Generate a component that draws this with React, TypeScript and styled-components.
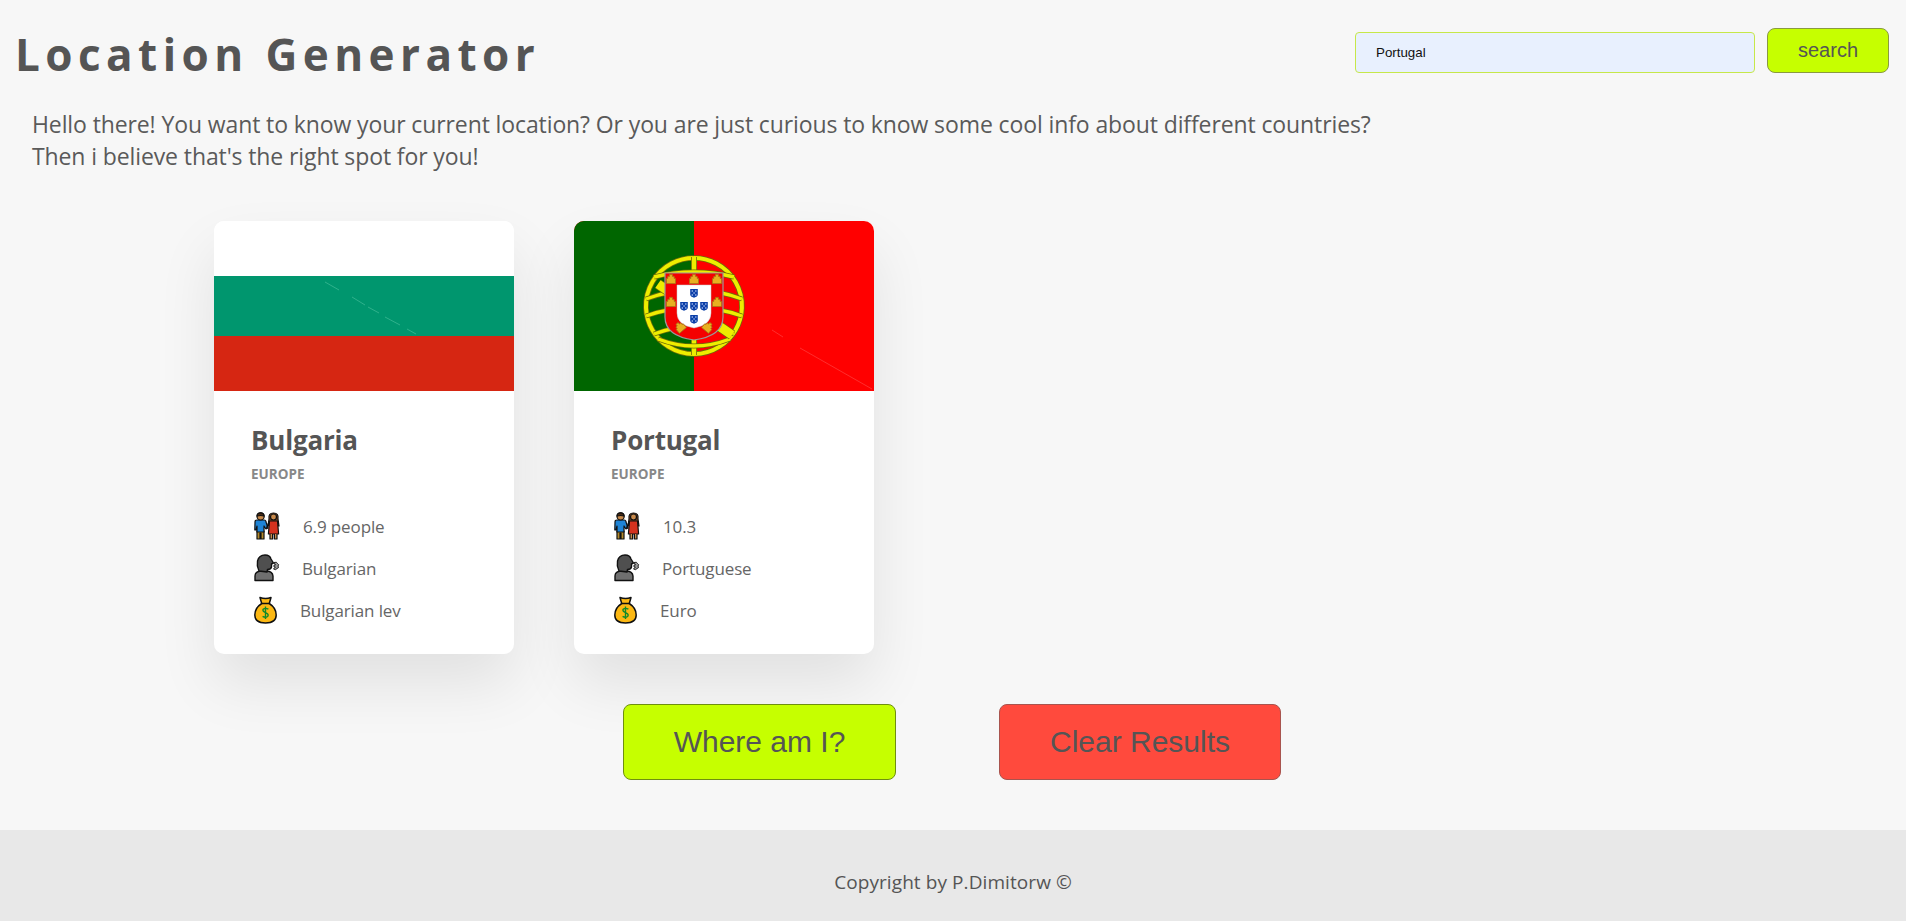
import * as React from "react";
import styled, { createGlobalStyle } from "styled-components";

const GlobalStyle = createGlobalStyle`
  html, body {
    margin: 0;
    padding: 0;
    background: #f7f7f7;
    color: #555;
    font-family: "Open Sans", "Noto Sans", sans-serif;
  }
  * {
    box-sizing: border-box;
  }
`;

const Page = styled.div`
  display: flex;
  flex-direction: column;
  width: 100%;
  height: 921px;
  overflow: hidden;
`;

const Header = styled.header`
  display: flex;
  justify-content: space-between;
  align-items: flex-start;
  padding: 26px 17px 0 15px;
  height: 108px;
`;

const Title = styled.h1`
  margin: 0;
  font-size: 44px;
  line-height: 56px;
  font-weight: 700;
  letter-spacing: 5.45px;
  color: #555;
`;

const SearchForm = styled.form`
  display: flex;
  align-items: flex-end;
  gap: 12px;
  margin-top: 2px;
`;

const SearchInput = styled.input`
  width: 400px;
  height: 41px;
  padding: 0 20px;
  background: #e8f0fe;
  border: 1px solid #c6e84a;
  border-radius: 4px;
  font-family: "Liberation Sans", Arial, sans-serif;
  font-size: 13.33px;
  color: #111;
  outline: none;
`;

const SearchButton = styled.button`
  width: 122px;
  height: 45px;
  padding: 0 0 1px;
  background: #c6ff00;
  border: 1px solid #8a9a40;
  border-radius: 8px;
  font-family: "Liberation Sans", Arial, sans-serif;
  font-size: 20px;
  color: #555;
`;

const Intro = styled.p`
  margin: 0;
  padding-left: 32px;
  font-size: 23px;
  line-height: 32px;
  letter-spacing: -0.11px;
  color: #5a5a5a;
`;

const Cards = styled.section`
  display: flex;
  gap: 60px;
  padding: 49px 0 0 214px;
`;

const Card = styled.article`
  width: 300px;
  height: 433px;
  background: #fff;
  border-radius: 10px;
  overflow: hidden;
  box-shadow: 0 30px 60px rgba(0, 0, 0, 0.09);
`;

const Flag = styled.svg`
  display: block;
  width: 300px;
  height: 170px;
`;

const CardBody = styled.div`
  padding: 31px 38px 0 37px;
`;

const CountryName = styled.h2`
  margin: 0;
  font-size: 26px;
  line-height: 36px;
  font-weight: 700;
  letter-spacing: -0.2px;
  color: #555;
`;

const Region = styled.h3`
  margin: 7px 0 0;
  font-size: 13.5px;
  line-height: 18px;
  font-weight: 700;
  color: #888;
`;

const Facts = styled.ul`
  display: flex;
  flex-direction: column;
  gap: 14px;
  margin: 29px 0 0;
  padding: 0 0 0 3px;
  list-style: none;
`;

const Fact = styled.li`
  display: flex;
  align-items: center;
  gap: 23px;
  height: 28px;
  font-size: 17px;
  letter-spacing: -0.12px;
  color: #666;
`;

const Actions = styled.div`
  display: flex;
  justify-content: center;
  gap: 103px;
  margin-top: 50px;
  padding-right: 2px;
`;

const ActionButton = styled.button<{ $tone: "go" | "clear" }>`
  width: ${(p) => (p.$tone === "go" ? 273 : 282)}px;
  height: 76px;
  background: ${(p) => (p.$tone === "go" ? "#c6ff00" : "#ff4a3d")};
  border: 1px solid ${(p) => (p.$tone === "go" ? "#6f8f10" : "#a8544e")};
  border-radius: 8px;
  font-family: "Liberation Sans", Arial, sans-serif;
  font-size: 30px;
  color: #555;
`;

const Footer = styled.footer`
  display: flex;
  justify-content: center;
  align-items: center;
  margin-top: auto;
  height: 91px;
  padding-top: 12px;
  background: #e8e8e8;
  font-size: 19px;
  letter-spacing: 0.08px;
  color: #555;
`;

const BulgariaFlag = () => (
  <Flag viewBox="0 0 300 170">
    <rect width="300" height="55" fill="#ffffff" />
    <rect y="55" width="300" height="60" fill="#00966e" />
    <rect y="115" width="300" height="55" fill="#d62612" />
    <path
      d="M111 61 L125 69 M138 76 L151 84 M154 86 L165 92 M171 96 L186 104 M193 108 L202 113"
      stroke="#4fc3a0"
      strokeWidth="0.6"
      fill="none"
    />
  </Flag>
);

const Ring = ({ d, w = 3.4 }: { d: string; w?: number }) => (
  <g fill="none">
    <path d={d} stroke="#6d6c08" strokeWidth={w + 1.6} />
    <path d={d} stroke="#eeee00" strokeWidth={w} />
  </g>
);

const Castle = ({ x, y, r = 0 }: { x: number; y: number; r?: number }) => (
  <g transform={`translate(${x} ${y}) rotate(${r})`}>
    <path
      d="M-4.5 4.5 V-.5 H-3.2 V-2.6 H-1.4 V-4.6 H1.4 V-2.6 H3.2 V-.5 H4.5 V4.5 Z"
      fill="#e8b020"
      stroke="#a87a18"
      strokeWidth="0.8"
    />
  </g>
);

const Quina = ({ x, y }: { x: number; y: number }) => (
  <g transform={`translate(${x} ${y})`}>
    <path d="M-3.8 -4 H3.8 V1.6 Q3.8 3.8 0 4.8 Q-3.8 3.8 -3.8 1.6 Z" fill="#0b3fa8" />
    <path
      d="M-1.8 -2 h.1 M1.8 -2 h.1 M0 0 h.1 M-1.8 2 h.1 M1.8 2 h.1"
      stroke="#cfdcff"
      strokeWidth="1.3"
      strokeLinecap="round"
    />
  </g>
);

const PortugalFlag = () => (
  <Flag viewBox="0 0 300 170">
    <rect width="300" height="170" fill="#ff0000" />
    <rect width="120" height="170" fill="#006600" />
    <path d="M226 127 L298 168 M198 109 L209 116" stroke="#ff5a5a" strokeWidth="0.5" />

    <Ring d="M120 37 A48 48 0 1 1 119.9 37" w={4} />
    <Ring d="M120 36 V134" w={4.4} />
    <Ring d="M80 56 Q120 46 160 56" />
    <Ring d="M72 78 Q120 60 168 78" />
    <Ring d="M72 95 Q120 78 168 95" />
    <Ring d="M80 113 Q120 98 160 113" />
    <Ring d="M84 118 Q120 132 156 118" />
    <Ring d="M84 63 L158 114" w={9} />

    <path
      d="M91 52 H149 V96 Q149 115 120 119 Q91 115 91 96 Z"
      fill="#f40000"
      stroke="#9a9a9a"
      strokeWidth="1.2"
    />
    <path
      d="M103 64 H137 V92 Q137 104 120 107 Q103 104 103 92 Z"
      fill="#ffffff"
      stroke="#c8c8c8"
      strokeWidth="0.5"
    />
    <Castle x={97} y={58} />
    <Castle x={120} y={58} />
    <Castle x={143} y={58} />
    <Castle x={97} y={81} />
    <Castle x={143} y={81} />
    <Castle x={106} y={106} r={-40} />
    <Castle x={134} y={106} r={40} />
    <Quina x={120} y={72} />
    <Quina x={110} y={85} />
    <Quina x={120} y={85} />
    <Quina x={130} y={85} />
    <Quina x={120} y={98} />
  </Flag>
);

const CoupleIcon = () => (
  <svg width="26" height="28" viewBox="0 0 26 28">
    <g stroke="#111" strokeWidth="1.2" strokeLinejoin="round">
      <path d="M3 27 V19 H10 V27 H7 V21 H6 V27 Z" fill="#b38a2e" />
      <path d="M1 10 Q1 8 3 8 H10 Q12 8 12 10 L14 16 L12 17 L10 14 V20 H3 V14 L2 18 H.8 Z" fill="#1f84d6" />
      <circle cx="6.6" cy="4.4" r="3.6" fill="#c98a4b" />
      <path d="M3 4 Q3 .8 6.6 .8 Q10 .8 10 4 Q7 3 3 4 Z" fill="#4a2b14" />
      <path d="M15 7 Q14 1 19.5 1 Q25 1 24 7 L25 14 H14 Z" fill="#7a4420" />
      <circle cx="19.5" cy="5" r="3" fill="#c98a4b" />
      <path d="M15.5 9 H23.5 L24.6 22 H14.4 Z" fill="#d5321f" />
      <path d="M16 22 V27 H18.6 V22 M20.4 22 V27 H23 V22" fill="#c98a4b" />
      <path d="M15 10 L12.5 16" fill="none" />
    </g>
  </svg>
);

const SpeakingHeadIcon = () => (
  <svg width="25" height="28" viewBox="0 0 25 28" overflow="visible">
    <g stroke="#111" strokeWidth="1.4" strokeLinejoin="round">
      <path d="M1 26.5 V22 Q1 17.5 7 17 H13 Q18.5 17.5 19 22 V26.5 Z" fill="#6f6f6f" />
      <path d="M5 17 Q2.5 12 3.5 7 Q5 1 11 1 Q16 1 17 5 L19.5 9 L17.5 10 V13 Q17 15.5 13.5 15.5 L13 18 Z" fill="#4f4f4f" />
    </g>
    <path
      d="M20 8.5 Q23 7.5 23.5 9.5 Q25.5 10.5 24 12 Q25.5 14 23 14.5 Q22 16.5 19.5 15 L21.5 13 H20 V11 H21.5 Z"
      fill="#9a9a9a"
      stroke="#222"
      strokeWidth="1"
      strokeLinejoin="round"
    />
  </svg>
);

const MoneyBagIcon = () => (
  <svg width="23" height="28" viewBox="0 0 23 28">
    <path
      d="M6 1.5 Q11.5 3.4 17 1.5 L15.3 7.5 Q22.2 12 22.2 19 Q22.2 27 11.5 27 Q.8 27 .8 19 Q.8 12 7.7 7.5 Z"
      fill="#fcb813"
      stroke="#111"
      strokeWidth="1.5"
      strokeLinejoin="round"
    />
    <path d="M7.5 7.6 H15.5" stroke="#111" strokeWidth="1.5" />
    <path
      d="M14.4 13.2 Q11.5 11.6 9.4 13 Q7.8 15 11.5 16.6 Q15.4 18.3 13.6 20.5 Q11.4 22 8.6 20.4 M11.5 10.4 V23"
      fill="none"
      stroke="#0f8a2a"
      strokeWidth="1.4"
    />
  </svg>
);

const countries = [
  {
    name: "Bulgaria",
    flag: <BulgariaFlag />,
    population: "6.9 people",
    language: "Bulgarian",
    currency: "Bulgarian lev",
  },
  {
    name: "Portugal",
    flag: <PortugalFlag />,
    population: "10.3",
    language: "Portuguese",
    currency: "Euro",
  },
];

export default function App() {
  return (
    <Page>
      <GlobalStyle />
      <Header>
        <Title>Location Generator</Title>
        <SearchForm onSubmit={(e) => e.preventDefault()}>
          <SearchInput defaultValue="Portugal" />
          <SearchButton>search</SearchButton>
        </SearchForm>
      </Header>
      <Intro>
        Hello there! You want to know your current location? Or you are just
        curious to know some cool info about different countries?
        <br />
        Then i believe that's the right spot for you!
      </Intro>
      <Cards>
        {countries.map((c) => (
          <Card key={c.name}>
            {c.flag}
            <CardBody>
              <CountryName>{c.name}</CountryName>
              <Region>EUROPE</Region>
              <Facts>
                <Fact>
                  <CoupleIcon />
                  {c.population}
                </Fact>
                <Fact>
                  <SpeakingHeadIcon />
                  {c.language}
                </Fact>
                <Fact>
                  <MoneyBagIcon />
                  {c.currency}
                </Fact>
              </Facts>
            </CardBody>
          </Card>
        ))}
      </Cards>
      <Actions>
        <ActionButton $tone="go">Where am I?</ActionButton>
        <ActionButton $tone="clear">Clear Results</ActionButton>
      </Actions>
      <Footer>Copyright by P.Dimitorw ©</Footer>
    </Page>
  );
}
